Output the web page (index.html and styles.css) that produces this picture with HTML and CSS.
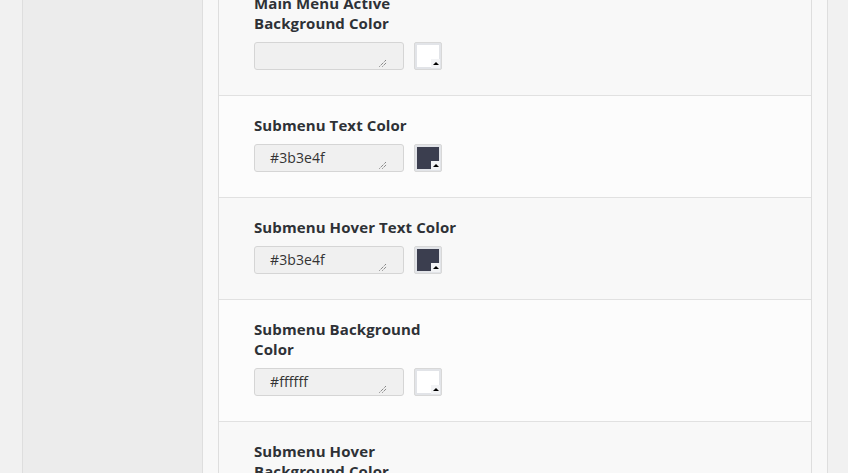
FILE: index.html
```html
<!DOCTYPE html>
<html>
<head>
<meta charset="utf-8">
<link rel="stylesheet" href="styles.css">
</head>
<body>
<div class="page">
  <div class="outer-left"></div>
  <aside class="sidebar"></aside>
  <div class="gutter"></div>
  <main class="panel">
    <section class="row alt">
      <label class="label">Main Menu Active Background Color</label>
      <div class="controls">
        <div class="field"><span class="value"></span><svg class="grip" width="8" height="8" viewBox="0 0 8 8"><path d="M0.5 7.5 L7.5 0.5 M3.5 7.5 L7.5 3.5"/></svg></div>
        <div class="swatch"><span class="chip" style="background:#ffffff"></span><span class="notch"></span></div>
      </div>
    </section>
    <section class="row">
      <label class="label">Submenu Text Color</label>
      <div class="controls">
        <div class="field"><span class="value">#3b3e4f</span><svg class="grip" width="8" height="8" viewBox="0 0 8 8"><path d="M0.5 7.5 L7.5 0.5 M3.5 7.5 L7.5 3.5"/></svg></div>
        <div class="swatch"><span class="chip" style="background:#3b3e4f"></span><span class="notch"></span></div>
      </div>
    </section>
    <section class="row alt">
      <label class="label">Submenu Hover Text Color</label>
      <div class="controls">
        <div class="field"><span class="value">#3b3e4f</span><svg class="grip" width="8" height="8" viewBox="0 0 8 8"><path d="M0.5 7.5 L7.5 0.5 M3.5 7.5 L7.5 3.5"/></svg></div>
        <div class="swatch"><span class="chip" style="background:#3b3e4f"></span><span class="notch"></span></div>
      </div>
    </section>
    <section class="row">
      <label class="label">Submenu Background Color</label>
      <div class="controls">
        <div class="field"><span class="value">#ffffff</span><svg class="grip" width="8" height="8" viewBox="0 0 8 8"><path d="M0.5 7.5 L7.5 0.5 M3.5 7.5 L7.5 3.5"/></svg></div>
        <div class="swatch"><span class="chip" style="background:#ffffff"></span><span class="notch"></span></div>
      </div>
    </section>
    <section class="row alt">
      <label class="label">Submenu Hover Background Color</label>
      <div class="controls">
        <div class="field"><span class="value">#3b3e4f</span><svg class="grip" width="8" height="8" viewBox="0 0 8 8"><path d="M0.5 7.5 L7.5 0.5 M3.5 7.5 L7.5 3.5"/></svg></div>
        <div class="swatch"><span class="chip" style="background:#3b3e4f"></span><span class="notch"></span></div>
      </div>
    </section>
  </main>
  <div class="gutter right"></div>
  <div class="outer-right"></div>
</div>
</body>
</html>
```

FILE: styles.css
```css
html, body {
  margin: 0;
  padding: 0;
  height: 100%;
  overflow: hidden;
  background: #f1f1f1;
  font-family: "Open Sans", "Liberation Sans", sans-serif;
  color: #32373c;
}
.page {
  display: flex;
  height: 473px;
  overflow: hidden;
}
.outer-left {
  width: 22px;
  flex: none;
  background: #f1f1f1;
}
.sidebar {
  width: 179px;
  flex: none;
  background: #ececec;
  border-left: 1px solid #dedede;
  border-right: 1px solid #dedede;
}
.gutter {
  width: 15px;
  flex: none;
  background: #f8f8f8;
}
.gutter.right {
  border-right: 1px solid #dedede;
}
.outer-right {
  flex: 1;
  background: #f1f1f1;
}
.panel {
  width: 592px;
  flex: none;
  border-left: 1px solid #dedede;
  border-right: 1px solid #dedede;
  margin-top: -26px;
  display: flex;
  flex-direction: column;
}
.row {
  background: #fcfcfc;
  border-bottom: 1px solid #e1e1e1;
  padding: 19px 35px 25px;
  display: flex;
  flex-direction: column;
  gap: 9px;
}
.row.alt {
  background: #f8f8f8;
}
.label {
  display: block;
  width: 208px;
  font-size: 15px;
  line-height: 20px;
  font-weight: 700;
  letter-spacing: 0.1px;
  color: #2e3136;
}
.controls {
  display: flex;
  gap: 10px;
  align-items: flex-start;
}
.field {
  position: relative;
  box-sizing: border-box;
  width: 150px;
  height: 28px;
  border: 1px solid #d5d5d5;
  border-radius: 3px;
  background: #f0f0f0;
  padding: 3px 15px;
  font-size: 14px;
  line-height: 20px;
  letter-spacing: 0.1px;
  color: #333;
}
.grip {
  position: absolute;
  right: 16px;
  bottom: 2px;
  fill: none;
  stroke: #555;
  stroke-width: 1;
  stroke-dasharray: 1 1;
}
.swatch {
  position: relative;
  box-sizing: border-box;
  width: 28px;
  height: 28px;
  border: 1px solid #d8d8d8;
  background: #e2e4e8;
  padding: 2px;
  border-radius: 2px;
}
.chip {
  display: block;
  width: 22px;
  height: 22px;
}
.notch {
  position: absolute;
  right: 1px;
  bottom: 1px;
  width: 9px;
  height: 9px;
  background: #f2f3f5;
}
.notch::after {
  content: "";
  position: absolute;
  left: 2px;
  top: 3px;
  border-left: 3px solid transparent;
  border-right: 3px solid transparent;
  border-bottom: 3px solid #000;
}
```
